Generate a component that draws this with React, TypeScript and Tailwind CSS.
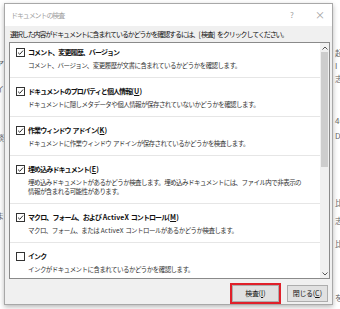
import React from "react";

const F = "[font-family:'Noto_Sans_CJK_JP',sans-serif]";

function Check({ on }: { on: boolean }) {
  return (
    <svg width="9" height="9" viewBox="0 0 9 9" className="shrink-0">
      <rect x="0.5" y="0.5" width="8" height="8" fill="#fff" stroke="#333" strokeWidth="1" />
      {on && <path d="M2 4.6 L3.8 6.3 L7 2.6" fill="none" stroke="#333" strokeWidth="1" />}
    </svg>
  );
}

type Item = { on: boolean; title: React.ReactNode; desc: React.ReactNode[] };

const U = ({ c }: { c: string }) => <span className="underline underline-offset-[1px]">{c}</span>;
const L = ({ children }: { children: React.ReactNode }) => <span className="tracking-[0.1px] whitespace-pre">{children}</span>;
const K = ({ c }: { c: string }) => (
  <L>
    (<U c={c} />)
  </L>
);

const items: Item[] = [
  { on: true, title: <>コメント、変更履歴、バージョン</>, desc: ["コメント、バージョン、変更履歴が文書に含まれているかどうかを確認します。"] },
  { on: true, title: <>ドキュメントのプロパティと個人情報<K c="U" /></>, desc: ["ドキュメントに隠しメタデータや個人情報が保存されていないかどうかを確認します。"] },
  { on: true, title: <>作業ウィンドウ<L> </L>アドイン<K c="K" /></>, desc: [<>ドキュメントに作業ウィンドウ<L> </L>アドインが保存されているかどうかを検査します。</>] },
  { on: true, title: <>埋め込みドキュメント<K c="E" /></>, desc: ["埋め込みドキュメントがあるかどうか検査します。埋め込みドキュメントには、ファイル内で非表示の", "情報が含まれる可能性があります。"] },
  { on: true, title: <>マクロ、フォーム、および<L> ActiveX </L>コントロール<K c="M" /></>, desc: [<>マクロ、フォーム、または<L> ActiveX </L>コントロールがあるかどうか検査します。</>] },
  { on: false, title: <>インク</>, desc: ["インクがドキュメントに含まれているかどうかを確認します。"] },
];

export default function App() {
  return (
    <div className={`w-[340px] h-[309px] bg-white flex overflow-hidden ${F}`}>
      <div className="w-[4px] shrink-0 flex flex-col items-end overflow-hidden text-[8px] leading-[9px] text-[#666] pt-[59px]">
        <div className="whitespace-nowrap">ア</div>
        <div className="whitespace-nowrap mt-[16px]">イ</div>
        <div className="whitespace-nowrap mt-[40px]">談</div>
        <div className="whitespace-nowrap mt-[69px]">ま</div>
      </div>
      <div className="w-[329px] h-[302px] mt-[3px] shrink-0 flex flex-col border border-[#a8a8a8] bg-[#f0f0f0] shadow-[0_2px_5px_rgba(0,0,0,0.28)]">
        <div className="h-[22px] bg-white flex items-center pl-[6px] text-[7px] text-[#a0a0a0]">
          <span className="flex-1 tracking-[-1.1px]">ドキュメントの検査</span>
          <span className="w-[10px] text-center mr-[18px] text-[8px]">?</span>
          <span className="w-[10px] text-center mr-[7px] text-[10px] leading-none">×</span>
        </div>
        <div className="flex-1 flex flex-col pt-[3px] pl-[4px] pr-[2px]">
          <div className="h-[10px] leading-[10px] text-[7px] text-[#111] tracking-[-1.1px] pl-[1px] whitespace-nowrap">
            選択した内容がドキュメントに含まれているかどうかを確認するには、<L>[</L>検査<L>] </L>をクリックしてください。
          </div>
          <div className="mt-[3px] h-[237px] border border-[#8a8a8a] bg-white flex">
            <div className="flex-1 flex flex-col overflow-hidden">
              {items.map((it, i) => (
                <div key={i} className={`flex flex-col pl-[6px] ${i === 0 ? "pt-[4px]" : "pt-[8px] border-t border-[#e6e6e6]"} pb-[7px] shrink-0`}>
                  <div className="flex items-center h-[10px] gap-[3px]">
                    <Check on={it.on} />
                    <span className="text-[7px] font-bold text-[#111] tracking-[-0.9px] whitespace-nowrap leading-[10px]">{it.title}</span>
                  </div>
                  <div className="mt-[4px] pl-[12px] flex flex-col">
                    {it.desc.map((d, j) => (
                      <div key={j} className="text-[6.5px] leading-[9px] h-[9px] text-[#333] tracking-[-0.55px] whitespace-nowrap">{d}</div>
                    ))}
                  </div>
                </div>
              ))}
            </div>
            <div className="w-[9px] bg-[#f0f0f0] flex flex-col items-center">
              <div className="h-[9px] flex items-center justify-center">
                <svg width="6" height="4" viewBox="0 0 6 4"><path d="M0.5 3.5 L3 1 L5.5 3.5" fill="none" stroke="#555" strokeWidth="1" /></svg>
              </div>
              <div className="w-[7px] h-[115px] bg-[#cdcdcd]" />
              <div className="flex-1" />
              <div className="h-[9px] flex items-center justify-center">
                <svg width="6" height="4" viewBox="0 0 6 4"><path d="M0.5 0.5 L3 3 L5.5 0.5" fill="none" stroke="#555" strokeWidth="1" /></svg>
              </div>
            </div>
          </div>
          <div className="mt-[4px] flex items-center justify-end gap-[6px] pr-[2px]">
            <div className="border-2 border-[#e0202a] p-0">
              <div className="w-[47px] h-[17px] bg-[#e1e1e1] border border-[#adadad] flex items-center justify-center text-[7px] tracking-[-0.4px] text-[#111]">
                検査<K c="I" />
              </div>
            </div>
            <div className="w-[41px] h-[17px] bg-[#e1e1e1] border border-[#adadad] flex items-center justify-center text-[7px] tracking-[-0.4px] text-[#111]">
              閉じる<K c="C" />
            </div>
          </div>
        </div>
      </div>
      <div className="flex-1 flex flex-col overflow-hidden text-[8px] leading-[9px] text-[#666] pt-[48px] pl-[2px]">
        <div className="whitespace-nowrap">起</div>
        <div className="whitespace-nowrap mt-[4px]">I</div>
        <div className="whitespace-nowrap mt-[4px]">志</div>
        <div className="whitespace-nowrap mt-[33px]">4G</div>
        <div className="whitespace-nowrap mt-[6px]">DC</div>
        <div className="whitespace-nowrap mt-[58px]">比</div>
        <div className="whitespace-nowrap mt-[9px]">志</div>
        <div className="whitespace-nowrap mt-[14px]">比</div>
        <div className="whitespace-nowrap mt-[45px]">を</div>
      </div>
    </div>
  );
}
